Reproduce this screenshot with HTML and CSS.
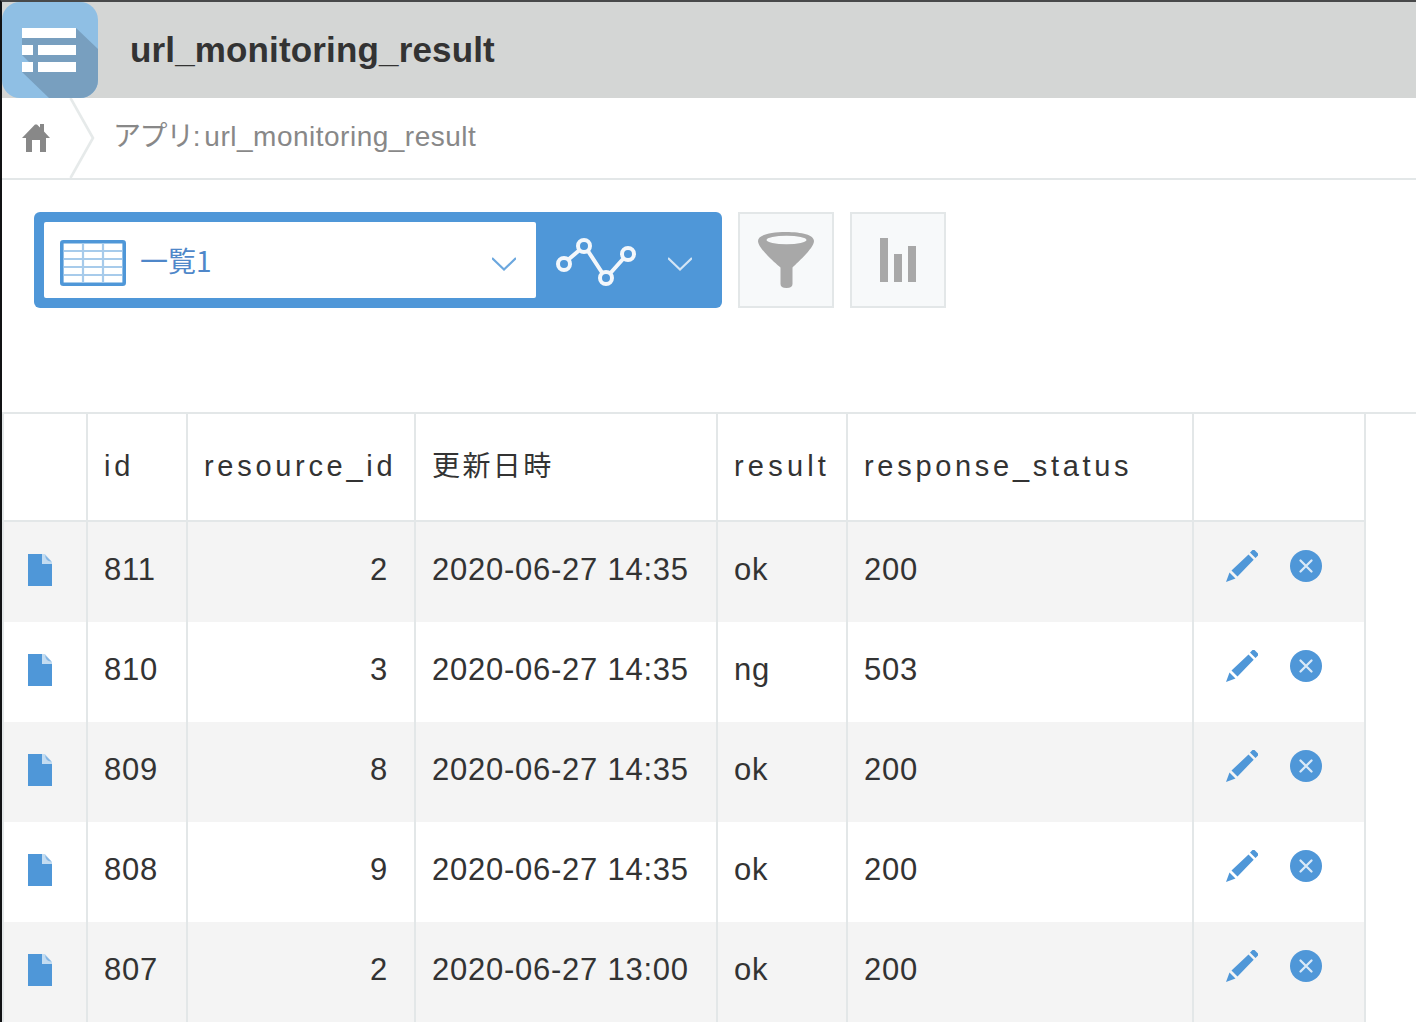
FILE: index.html
```html
<!DOCTYPE html>
<html lang="ja">
<head>
    <meta charset="UTF-8">
    <meta name="viewport" content="width=device-width, initial-scale=1.0">
    <title>url_monitoring_result</title>
    <link rel="stylesheet" href="styles.css">
</head>
<body>
    <!-- Shared icons -->
    <svg class="sprite" width="0" height="0">
        <symbol id="icon-doc" viewBox="0 0 24 32">
            <path d="M0 0H14L24 10V32H0Z" fill="#4f97d8"/>
            <path d="M14 0H17L24 8V10H14Z" fill="#c3dcf1"/>
            <path d="M17 1L23.500 7.500Q18 8 17 1Z" fill="#85b6e3"/>
        </symbol>
        <symbol id="icon-edit" viewBox="0 0 32 32">
            <path d="M26.500 0H28.500L32 3.500V5.500L29.500 8L24 2.500ZM22.500 4.500L27.700 9.700L11.500 26.500L5.500 20.500ZM3.500 22.500L9.500 28.500L0 32Z" fill="#4f97d8"/>
        </symbol>
        <symbol id="icon-delete" viewBox="0 0 32 32">
            <circle cx="16" cy="16" r="16" fill="#4f97d8"/>
            <path d="M10.500 10.500L21.500 21.500M21.500 10.500L10.500 21.500" stroke="#d9e9f7" stroke-width="2.300" stroke-linecap="round"/>
        </symbol>
        <symbol id="icon-arrow" viewBox="0 0 24 16">
            <path d="M0 2L12 13.500L24 2" fill="none" stroke="currentColor" stroke-width="2.200"/>
        </symbol>
    </svg>

    <div class="page">
        <header class="app-header">
            <svg class="app-icon" width="96" height="96" viewBox="0 0 96 96">
                <defs><clipPath id="iconClip"><rect width="96" height="96" rx="18"/></clipPath></defs>
                <g clip-path="url(#iconClip)">
                    <rect width="96" height="96" fill="#8fbfe4"/>
                    <path d="M74 26L96 47V96H47L20 70V56L20 36Z" fill="#789fbf"/>
                    <path d="M20 53V60H27Z" fill="#8fbfe4"/>
                </g>
                <path d="M20 26H74V36H20ZM20 43H31V53H20ZM36 43H74V53H36ZM20 60H31V70H20ZM36 60H74V70H36Z" fill="#fff"/>
            </svg>
            <h1 class="app-title">url_monitoring_result</h1>
        </header>

        <nav class="breadcrumb">
            <svg class="home-icon" width="28" height="28" viewBox="0 0 28 28">
                <path d="M0 14L13 0.500H15L18 3.500V0H22V7.500L28 14H24V28H18V16H10V28H4V14Z" fill="#888"/>
            </svg>
            <svg class="separator" width="26" height="80" viewBox="0 0 26 80">
                <path d="M1.500 0L24 40L1.500 80" fill="none" stroke="#e6eaea" stroke-width="2.600"/>
            </svg>
            <span class="crumb"><span class="crumb-kana">アプリ</span>: url_monitoring_result</span>
        </nav>

        <div class="toolbar">
            <div class="view-switch">
                <div class="view-select">
                    <svg width="66" height="46" viewBox="0 0 66 46">
                        <rect x="1.800" y="1.800" width="62.400" height="42.400" rx="1.500" fill="#fff"/>
                        <path d="M4 11H62M4 19H62M4 27H62M4 35H62M23 4V42M43 4V42" stroke="#a7cbeb" stroke-width="2.200"/>
                        <rect x="1.800" y="1.800" width="62.400" height="42.400" rx="1.500" fill="none" stroke="#4f97d8" stroke-width="3.600"/>
                    </svg>
                    <span class="view-name">一覧1</span>
                    <svg class="arrow" width="24" height="16"><use href="#icon-arrow"/></svg>
                </div>
                <div class="graph-select">
                    <svg width="80" height="48" viewBox="0 0 80 48" fill="none" stroke="#f3f7fb" stroke-width="4">
                        <path d="M13 21L23 12.500M32 13L46 34.500M54.500 35L67 21"/>
                        <circle cx="8" cy="26" r="6"/>
                        <circle cx="28" cy="8" r="6"/>
                        <circle cx="50" cy="40" r="6"/>
                        <circle cx="72" cy="16" r="6"/>
                    </svg>
                    <svg class="arrow" width="24" height="16"><use href="#icon-arrow"/></svg>
                </div>
            </div>
            <button class="tool-btn" aria-label="絞り込む">
                <svg width="56" height="56" viewBox="0 0 56 56">
                    <path d="M0 9C0 3 12 0 28 0S56 3 56 9C56 16 40 30 34.500 35.500V52Q34.500 56 28.500 56T22.500 52V35.500C16 30 0 16 0 9Z" fill="#a8a8a8"/>
                    <ellipse cx="28.500" cy="8" rx="20" ry="4.200" fill="#f7f9fa"/>
                </svg>
            </button>
            <button class="tool-btn" aria-label="集計する">
                <svg width="36" height="44" viewBox="0 0 36 44">
                    <path d="M0 0H8V44H0ZM14 16H22V44H14ZM28 8H36V44H28Z" fill="#a8a8a8"/>
                </svg>
            </button>
        </div>

        <div class="record-list">
            <table class="records">
                <colgroup>
                    <col class="col-detail">
                    <col class="col-id">
                    <col class="col-resource">
                    <col class="col-updated">
                    <col class="col-result">
                    <col class="col-status">
                    <col class="col-actions">
                </colgroup>
                <thead>
                    <tr>
                        <th></th>
                        <th>id</th>
                        <th>resource_id</th>
                        <th class="kanji">更新日時</th>
                        <th class="head-result">result</th>
                        <th>response_status</th>
                        <th></th>
                    </tr>
                </thead>
                <tbody>
                    <tr>
                        <td class="detail"><svg width="24" height="32"><use href="#icon-doc"/></svg></td>
                        <td>811</td>
                        <td class="number">2</td>
                        <td>2020-06-27 14:35</td>
                        <td>ok</td>
                        <td>200</td>
                        <td><div class="actions"><svg width="32" height="32"><use href="#icon-edit"/></svg><svg width="32" height="32"><use href="#icon-delete"/></svg></div></td>
                    </tr>
                    <tr>
                        <td class="detail"><svg width="24" height="32"><use href="#icon-doc"/></svg></td>
                        <td>810</td>
                        <td class="number">3</td>
                        <td>2020-06-27 14:35</td>
                        <td>ng</td>
                        <td>503</td>
                        <td><div class="actions"><svg width="32" height="32"><use href="#icon-edit"/></svg><svg width="32" height="32"><use href="#icon-delete"/></svg></div></td>
                    </tr>
                    <tr>
                        <td class="detail"><svg width="24" height="32"><use href="#icon-doc"/></svg></td>
                        <td>809</td>
                        <td class="number">8</td>
                        <td>2020-06-27 14:35</td>
                        <td>ok</td>
                        <td>200</td>
                        <td><div class="actions"><svg width="32" height="32"><use href="#icon-edit"/></svg><svg width="32" height="32"><use href="#icon-delete"/></svg></div></td>
                    </tr>
                    <tr>
                        <td class="detail"><svg width="24" height="32"><use href="#icon-doc"/></svg></td>
                        <td>808</td>
                        <td class="number">9</td>
                        <td>2020-06-27 14:35</td>
                        <td>ok</td>
                        <td>200</td>
                        <td><div class="actions"><svg width="32" height="32"><use href="#icon-edit"/></svg><svg width="32" height="32"><use href="#icon-delete"/></svg></div></td>
                    </tr>
                    <tr>
                        <td class="detail"><svg width="24" height="32"><use href="#icon-doc"/></svg></td>
                        <td>807</td>
                        <td class="number">2</td>
                        <td>2020-06-27 13:00</td>
                        <td>ok</td>
                        <td>200</td>
                        <td><div class="actions"><svg width="32" height="32"><use href="#icon-edit"/></svg><svg width="32" height="32"><use href="#icon-delete"/></svg></div></td>
                    </tr>
                </tbody>
            </table>
        </div>
    </div>
</body>
</html>
```
FILE: styles.css
```css
* {
    box-sizing: border-box;
}

body {
    margin: 0;
    overflow: hidden;
    background: #fff;
    color: #333;
    font-family: "Liberation Sans", "Noto Sans CJK JP", sans-serif;
}

svg {
    display: block;
    flex-shrink: 0;
}

.sprite {
    display: none;
}

.page {
    height: 1022px;
    overflow: hidden;
    border-top: 2px solid #48494a;
    border-left: 2px solid #111214;
}

.app-header {
    display: flex;
    align-items: center;
    height: 96px;
    background: #d4d6d5;
}

.app-title {
    margin: 0 0 0 32px;
    font-size: 35px;
    line-height: 40px;
    letter-spacing: 0.15px;
}

.breadcrumb {
    display: flex;
    align-items: center;
    height: 82px;
    border-bottom: 2px solid #e3e7e8;
    color: #888;
}

.home-icon {
    margin-left: 20px;
}

.separator {
    margin-left: 19px;
}

.crumb {
    margin: 0 0 2px 18px;
    font-size: 28px;
    line-height: 40px;
    letter-spacing: 0.5px;
    word-spacing: -5px;
}

.crumb-kana {
    letter-spacing: -1.4px;
}

.toolbar {
    display: flex;
    gap: 16px;
    height: 232px;
    padding: 32px;
}

.view-switch {
    display: flex;
    width: 688px;
    height: 96px;
    padding: 10px;
    border-radius: 6px;
    background: #4f97d8;
}

.view-select {
    display: flex;
    align-items: center;
    width: 492px;
    padding: 6px 20px 0 16px;
    border-radius: 2px;
    background: #fff;
    color: #6ba7de;
}

.view-name {
    margin: 0 0 6px 14px;
    color: #4f87c9;
    font-family: "Noto Sans CJK JP", sans-serif;
    font-size: 28px;
    font-weight: 400;
    line-height: 40px;
}

.arrow {
    margin-top: 2px;
}

.view-select .arrow {
    margin-left: auto;
}

.graph-select {
    display: flex;
    align-items: center;
    gap: 32px;
    padding: 4px 0 0 20px;
    color: #d3e5f5;
}

.graph-select .arrow {
    margin-top: 4px;
}

.tool-btn {
    display: flex;
    align-items: center;
    justify-content: center;
    width: 96px;
    height: 96px;
    padding: 0;
    border: 2px solid #e3e7e8;
    background: #f7f9fa;
}

.record-list {
    border-top: 2px solid #e3e7e8;
}

.records {
    width: 1364px;
    table-layout: fixed;
    border-spacing: 0;
    border-left: 2px solid #e3e7e8;
}

.col-detail { width: 84px; }
.col-id { width: 100px; }
.col-resource { width: 228px; }
.col-updated { width: 302px; }
.col-result { width: 130px; }
.col-status { width: 346px; }
.col-actions { width: 172px; }

.records th,
.records td {
    padding: 0 0 0 16px;
    border-right: 2px solid #e3e7e8;
    text-align: left;
    white-space: nowrap;
}

.records th {
    height: 108px;
    padding-bottom: 2px;
    border-bottom: 2px solid #e3e7e8;
    font-size: 29px;
    font-weight: 400;
    letter-spacing: 3.7px;
}

.records .head-result {
    letter-spacing: 4.2px;
}

.records .kanji {
    padding-bottom: 6px;
    font-size: 28px;
    letter-spacing: 2.4px;
}

.records td {
    height: 100px;
    padding-bottom: 4px;
    font-size: 31px;
    letter-spacing: 0.75px;
}

.records tbody tr:nth-child(odd) {
    background: #f4f4f4;
}

.records td.detail {
    padding: 0 0 4px 24px;
}

.records td.number {
    padding-right: 26px;
    text-align: right;
}

.actions {
    display: flex;
    gap: 32px;
    padding: 0 0 8px 16px;
}
```
